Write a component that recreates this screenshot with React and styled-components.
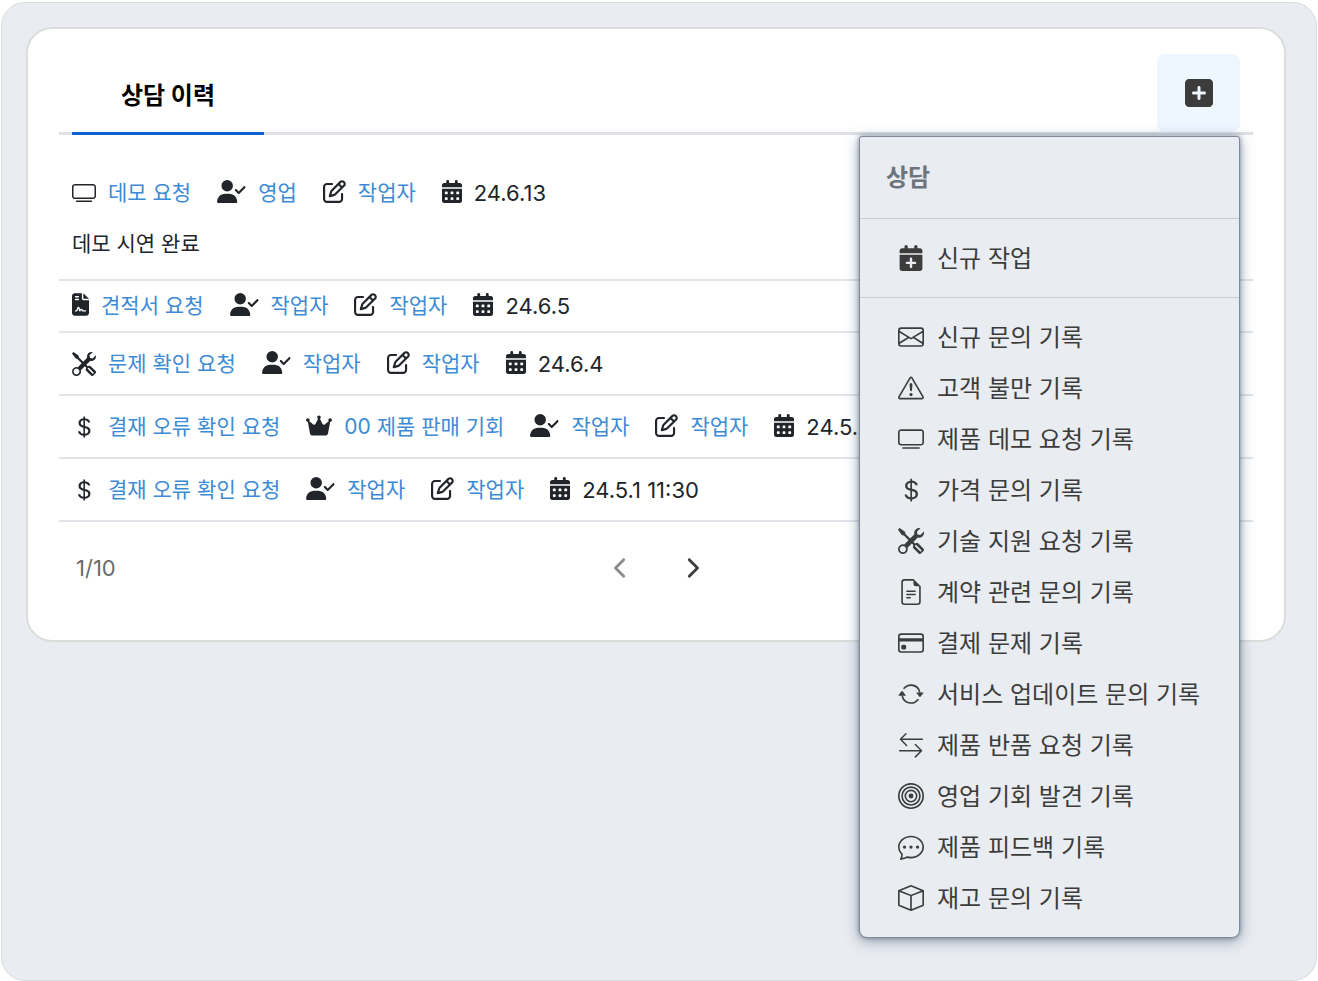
import React, { useState } from "react";
import styled, { createGlobalStyle } from "styled-components";
import {
  BsArrowRepeat,
  BsBox,
  BsBullseye,
  BsChatDots,
  BsCreditCard,
  BsCurrencyDollar,
  BsEnvelope,
  BsExclamationTriangle,
  BsFileEarmarkText,
  BsTools,
  BsTv,
} from "react-icons/bs";
import {
  FaCalendarDays,
  FaCalendarPlus,
  FaChevronLeft,
  FaChevronRight,
  FaCrown,
  FaFileContract,
  FaRegPenToSquare,
  FaSquarePlus,
  FaUserCheck,
} from "react-icons/fa6";

const SwapIcon = ({ size = 26 }) => (
  <svg width={size} height={size} viewBox="0 0 16 16" fill="none" stroke="currentColor" strokeLinecap="round" strokeLinejoin="round">
    <path d="M15 4.5H1.5M4.9 1.1L1.5 4.5l3.8 3.8M1 11.5h13.5M10.7 7.7l3.8 3.8-3.8 3.8" strokeWidth="0.9" />
  </svg>
);

const histories = [
  {
    icon: BsTv,
    title: "데모 요청",
    assignee: "영업",
    writer: "작업자",
    date: "24.6.13",
    memo: "데모 시연 완료",
  },
  { icon: FaFileContract, width: 17, title: "견적서 요청", assignee: "작업자", writer: "작업자", date: "24.6.5", compact: true },
  { icon: BsTools, title: "문제 확인 요청", assignee: "작업자", writer: "작업자", date: "24.6.4" },
  {
    icon: BsCurrencyDollar,
    title: "결재 오류 확인 요청",
    chance: "00 제품 판매 기회",
    assignee: "작업자",
    writer: "작업자",
    date: "24.5.",
  },
  { icon: BsCurrencyDollar, title: "결재 오류 확인 요청", assignee: "작업자", writer: "작업자", date: "24.5.1 11:30" },
];

const records = [
  { icon: BsEnvelope, label: "신규 문의 기록" },
  { icon: BsExclamationTriangle, label: "고객 불만 기록" },
  { icon: BsTv, label: "제품 데모 요청 기록" },
  { icon: BsCurrencyDollar, label: "가격 문의 기록" },
  { icon: BsTools, label: "기술 지원 요청 기록" },
  { icon: BsFileEarmarkText, label: "계약 관련 문의 기록" },
  { icon: BsCreditCard, label: "결제 문제 기록" },
  { icon: BsArrowRepeat, label: "서비스 업데이트 문의 기록" },
  { icon: SwapIcon, label: "제품 반품 요청 기록" },
  { icon: BsBullseye, label: "영업 기회 발견 기록" },
  { icon: BsChatDots, label: "제품 피드백 기록" },
  { icon: BsBox, label: "재고 문의 기록" },
];

function Meta({ icon: Icon, width, children }) {
  return (
    <MetaItem $width={width}>
      <Icon />
      <MetaLink href="#">{children}</MetaLink>
    </MetaItem>
  );
}

function HistoryRow({ item }) {
  return (
    <Row $compact={item.compact} $first={!!item.memo}>
      <MetaLine>
        <Meta icon={item.icon} width={item.width}>{item.title}</Meta>
        {item.chance && <Meta icon={FaCrown} width={26}>{item.chance}</Meta>}
        <Meta icon={FaUserCheck} width={29}>{item.assignee}</Meta>
        <Meta icon={FaRegPenToSquare} width={23}>{item.writer}</Meta>
        <MetaItem $width={20}>
          <FaCalendarDays />
          <MetaDate>{item.date}</MetaDate>
        </MetaItem>
      </MetaLine>
      {item.memo && <Memo>{item.memo}</Memo>}
    </Row>
  );
}

function RecordMenu() {
  return (
    <Menu>
      <MenuTitle>상담</MenuTitle>
      <MenuGroup $divided>
        <MenuItem type="button">
          <FaCalendarPlus size={26} />
          신규 작업
        </MenuItem>
      </MenuGroup>
      <MenuGroup>
        {records.map(({ icon: Icon, label }) => (
          <MenuItem type="button" key={label}>
            <Icon size={26} />
            {label}
          </MenuItem>
        ))}
      </MenuGroup>
    </Menu>
  );
}

export default function App() {
  const [open, setOpen] = useState(true);
  return (
    <Page>
      <GlobalStyle />
      <Frame>
        <Card>
          <CardHead>
            <Tab type="button">상담 이력</Tab>
            <AddWrap>
              <AddButton type="button" aria-label="상담 추가" aria-expanded={open} onClick={() => setOpen(!open)}>
                <FaSquarePlus size={32} />
              </AddButton>
              {open && <RecordMenu />}
            </AddWrap>
          </CardHead>
          <List>
            {histories.map((item) => (
              <HistoryRow key={item.date} item={item} />
            ))}
          </List>
          <Pager>
            <PageCount>1/10</PageCount>
            <PageButtons>
              <PageButton type="button" aria-label="이전" $dim>
                <FaChevronLeft size={22} />
              </PageButton>
              <PageButton type="button" aria-label="다음">
                <FaChevronRight size={22} />
              </PageButton>
            </PageButtons>
          </Pager>
        </Card>
      </Frame>
    </Page>
  );
}

const GlobalStyle = createGlobalStyle`
  * {
    box-sizing: border-box;
  }
  body {
    margin: 0;
    background: #fff;
    color: #212529;
    font-family: Inter, "Noto Sans CJK KR", sans-serif;
    font-size: 21px;
    line-height: 32px;
  }
  button {
    font: inherit;
    border: 0;
    padding: 0;
    background: none;
    cursor: pointer;
  }
`;

const Page = styled.div`
  min-height: 100vh;
  padding: 2px 1px 0;
  display: flex;
`;

const Frame = styled.main`
  flex: 1;
  padding: 24px 30px 24px 24px;
  border: 1px solid #d9dbdd;
  border-radius: 24px;
  background: #e9ecf1;
`;

const Card = styled.section`
  padding: 25px 31px 48px;
  border: 2px solid #dcdcdc;
  border-radius: 26px;
  background: #fff;
`;

const CardHead = styled.header`
  display: flex;
  justify-content: space-between;
  height: 81px;
  padding: 0 13px;
  border-bottom: 3px solid #dee2e6;
`;

const Tab = styled.button`
  width: 192px;
  height: 81px;
  padding-top: 6px;
  border-bottom: 3px solid #0d62d0;
  color: #000;
  font-size: 24px;
  font-weight: 700;
`;

const AddWrap = styled.div`
  position: relative;
`;

const AddButton = styled.button`
  display: flex;
  align-items: center;
  justify-content: center;
  width: 83px;
  height: 78px;
  border-radius: 8px;
  background: #eef6ff;
  color: #3c3c3c;
`;

const Menu = styled.div`
  position: absolute;
  top: 100%;
  right: 0;
  z-index: 1;
  width: 381px;
  margin-top: 4px;
  border: 1px solid #7f8b99;
  border-radius: 3px 3px 8px 8px;
  background: #e9ecf1;
  box-shadow: 0 0 4px rgba(50, 70, 90, 0.5), 0 3px 14px rgba(60, 85, 115, 0.5);
`;

const MenuTitle = styled.h2`
  margin: 0;
  padding: 25px 26px 24px;
  border-bottom: 1px solid #c8ccd1;
  color: #6c757d;
  font-size: 24px;
  font-weight: 700;
  line-height: 32px;
`;

const MenuGroup = styled.div`
  padding: 14px 0 13px;
  border-bottom: ${({ $divided }) => ($divided ? "1px solid #c8ccd1" : "0")};
`;

const MenuItem = styled.button`
  display: flex;
  align-items: center;
  gap: 13px;
  width: 100%;
  height: 51px;
  padding: 0 38px;
  color: #3c3c3c;
  font-size: 24px;
  text-align: left;
  white-space: nowrap;
  svg {
    flex: 0 0 26px;
    margin-bottom: 2px;
  }
`;

const List = styled.ul`
  margin: 0;
  padding: 24px 0 0;
  list-style: none;
`;

const Row = styled.li`
  padding: ${({ $compact, $first }) => ($first ? "18px 13px 19px" : $compact ? "9px 13px" : "15px 13px 14px")};
  border-bottom: 2px solid #e1e5ea;
`;

const MetaLine = styled.div`
  display: flex;
  gap: 26px;
  white-space: nowrap;
`;

// glyphs with a $width are 23px tall, the others sit in a 24px square
const MetaItem = styled.span`
  display: flex;
  align-items: center;
  gap: 12px;
  svg {
    flex: none;
    width: ${({ $width }) => $width || 24}px;
    height: ${({ $width }) => ($width ? 23 : 24)}px;
    margin-bottom: ${({ $width }) => ($width ? 3 : 0)}px;
  }
`;

const MetaLink = styled.a`
  color: #3d8bd4;
  text-decoration: none;
`;

const MetaDate = styled.span`
  font-size: 22px;
`;

const Memo = styled.p`
  margin: 19px 0 0;
`;

const Pager = styled.footer`
  display: grid;
  grid-template-columns: 1fr auto 1fr;
  align-items: center;
  height: 48px;
  margin-top: 22px;
  padding: 0 17px;
`;

const PageCount = styled.span`
  color: #6b6b6b;
  font-size: 22px;
`;

const PageButtons = styled.div`
  display: flex;
  gap: 39px;
`;

const PageButton = styled.button`
  display: flex;
  justify-content: center;
  width: 32px;
  color: ${({ $dim }) => ($dim ? "#8a8a8a" : "#3c3c3c")};
`;
